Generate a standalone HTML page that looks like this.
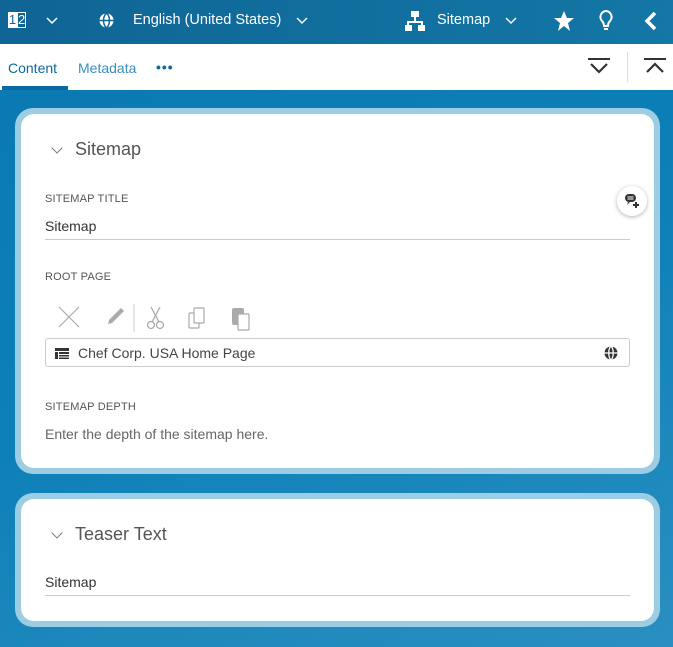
<!DOCTYPE html>
<html><head><meta charset="utf-8"><style>
*{margin:0;padding:0;box-sizing:border-box}
body{width:673px;height:647px;overflow:hidden;font-family:"Liberation Sans",sans-serif;background:linear-gradient(160deg,#0a78b0 0%,#0d80b8 50%,#2a8fc0 100%);position:relative}
.top{position:absolute;left:0;top:0;width:673px;height:44px;background:linear-gradient(90deg,#0f6595,#11709f 60%,#1477a5);color:#fff}
.top span{position:absolute;font-size:15px;top:12px;white-space:nowrap}
.top svg,.tabs svg{position:absolute}
.tabs{position:absolute;top:44px;left:0;width:673px;height:46px;background:#fff}
.card{position:absolute;left:15px;width:645px;background:#9ccde3;border-radius:18px;padding:6px}
.inner{background:#fff;border-radius:13px;width:100%;height:100%;position:relative}
.lbl{position:absolute;left:24px;font-size:11px;color:#555;letter-spacing:.2px}
.val{position:absolute;left:24px;font-size:14px;color:#333}
.line{position:absolute;left:24px;width:585px;height:1px;background:#ccc}
.h{position:absolute;left:54px;font-size:18px;color:#555}
.chev{position:absolute;left:32px;width:8px;height:8px;border-right:1.3px solid #777;border-bottom:1.3px solid #777;transform:rotate(45deg)}
</style></head><body>
<div class="top">
<div style="position:absolute;left:8px;top:12px;width:9px;height:16px;background:#fff;color:#0f6595;font-size:13px;text-align:center;line-height:16px">1</div>
<div style="position:absolute;left:17px;top:12px;width:9px;height:16px;border:1px solid #fff;font-size:13px;text-align:center;line-height:14px">2</div>
<svg style="left:46px;top:17px" width="12" height="8"><path d="M1 1l5 5 5-5" stroke="#fff" fill="none" stroke-width="1.5"/></svg>
<svg style="left:99px;top:13px" width="15" height="15"><circle cx="7.5" cy="7.5" r="7" fill="#fff"/><path d="M0 7.5h15M7.5 0c-4 4-4 11 0 15M7.5 0c4 4 4 11 0 15" stroke="#0f6595" stroke-width="1.5" fill="none"/></svg>
<span style="left:133px;font-size:14.5px">English (United States)</span>
<svg style="left:296px;top:17px" width="12" height="8"><path d="M1 1l5 5 5-5" stroke="#fff" fill="none" stroke-width="1.5"/></svg>
<svg style="left:405px;top:10px" width="20" height="22" fill="#fff"><rect x="6" y="1" width="8" height="6"/><rect x="9" y="7" width="2" height="5"/><rect x="2" y="11" width="16" height="2"/><rect x="2" y="12" width="2" height="3"/><rect x="16" y="12" width="2" height="3"/><rect x="0" y="15" width="7" height="6"/><rect x="13" y="15" width="7" height="6"/></svg>
<span style="left:437px;font-size:14.5px;top:12px">Sitemap</span>
<svg style="left:505px;top:17px" width="12" height="8"><path d="M1 1l5 5 5-5" stroke="#fff" fill="none" stroke-width="1.5"/></svg>
<svg style="left:553px;top:10px" width="22" height="22"><path d="M11 1l3 7h7l-6 5 2 8-6-5-6 5 2-8-6-5h7z" fill="#fff"/></svg>
<svg style="left:598px;top:9px" width="16" height="24" fill="none" stroke="#fff" stroke-width="2"><path d="M8 2a6 6 0 0 0-4 10c1 1 2 3 2 5h4c0-2 1-4 2-5a6 6 0 0 0-4-10zM6 20h4"/></svg>
<svg style="left:644px;top:11px" width="14" height="20"><path d="M11 2L3 10l8 8" stroke="#fff" stroke-width="3.5" fill="none"/></svg>
</div>
<div class="tabs">
<div style="position:absolute;left:8px;top:16px;font-size:14px;color:#0b6aa0">Content</div>
<div style="position:absolute;left:2px;top:42px;width:66px;height:4px;background:#0b6aa0"></div>
<div style="position:absolute;left:78px;top:16px;font-size:14px;color:#3a8fc4">Metadata</div>
<div style="position:absolute;left:156px;top:15px;font-size:14px;color:#0b6aa0;font-weight:bold;letter-spacing:1px">•••</div>
<svg style="left:587px;top:14px" width="24" height="18"><path d="M1 1h22" stroke="#333" stroke-width="2"/><path d="M4 6l8 8 8-8" stroke="#333" stroke-width="2.2" fill="none"/></svg>
<div style="position:absolute;left:627px;top:8px;width:1px;height:30px;background:#ddd"></div>
<svg style="left:643px;top:14px" width="24" height="18"><path d="M1 1h22" stroke="#333" stroke-width="2"/><path d="M4 14l8-8 8 8" stroke="#333" stroke-width="2.2" fill="none"/></svg>
</div>
<div class="card" style="top:108px;height:366px"><div class="inner">
<div class="chev" style="top:30px"></div>
<div class="h" style="top:25px">Sitemap</div>
<div class="lbl" style="top:79px">SITEMAP TITLE</div>
<div style="position:absolute;left:596px;top:72px;width:30px;height:30px;border-radius:50%;background:#fff;box-shadow:0 1px 4px rgba(0,0,0,.3)"><svg style="position:absolute;left:8px;top:8px" width="15" height="15"><rect x="0" y="0" width="11" height="8" rx="4" fill="#333"/><path d="M3 8l-1 3 3-3" fill="#333"/><path d="M2.5 3h6M2.5 5h6" stroke="#fff"/><path d="M11 8v6M8 11h6" stroke="#333" stroke-width="2"/></svg></div>
<div class="val" style="top:104px">Sitemap</div>
<div class="line" style="top:125px"></div>
<div class="lbl" style="top:157px">ROOT PAGE</div>
<svg style="position:absolute;left:36px;top:190px" width="210" height="28">
<path d="M2 3l20 20M22 3l-20 20" stroke="#aaa" stroke-width="1.2"/>
<path d="M64 4l3 3-12 12-4 1 1-4z" fill="#aaa"/>
<path d="M77 0v28" stroke="#ccc"/>
<circle cx="94" cy="21" r="3.5" stroke="#aaa" fill="none" stroke-width="1.3"/><circle cx="103" cy="21" r="3.5" stroke="#aaa" fill="none" stroke-width="1.3"/><path d="M95 18l8-15M102 18l-8-15" stroke="#aaa" stroke-width="1.3"/>
<rect x="132" y="9" width="10" height="15" rx="1" fill="none" stroke="#aaa" stroke-width="1.2"/><rect x="137" y="4" width="10" height="15" rx="1" fill="#fff" stroke="#aaa" stroke-width="1.2"/>
<rect x="175" y="4" width="12" height="17" rx="2" fill="#aaa"/><rect x="181" y="10" width="11" height="16" rx="1" fill="#fff" stroke="#aaa" stroke-width="1.2"/>
</svg>
<div style="position:absolute;left:24px;top:224px;width:585px;height:29px;border:1px solid #ccc;border-radius:3px">
<svg style="position:absolute;left:9px;top:9px" width="14" height="11" fill="#333"><rect x="0" y="0" width="14" height="3"/><rect x="0" y="4" width="3" height="7"/><rect x="4" y="4" width="10" height="2"/><rect x="4" y="7" width="10" height="1.5"/><rect x="4" y="9.5" width="10" height="1.5"/></svg>
<div style="position:absolute;left:32px;top:6px;font-size:14px;color:#444">Chef Corp. USA Home Page</div>
<svg style="position:absolute;left:558px;top:7px" width="14" height="14"><circle cx="7" cy="7" r="6.5" fill="#333"/><path d="M0 7h14M7 0c-3 3-3 11 0 14M7 0c3 3 3 11 0 14" stroke="#fff" stroke-width="1.3" fill="none"/></svg>
</div>
<div class="lbl" style="top:287px">SITEMAP DEPTH</div>
<div class="val" style="top:312px;color:#666">Enter the depth of the sitemap here.</div>
</div></div>
<div class="card" style="top:493px;height:134px"><div class="inner">
<div class="chev" style="top:30px"></div>
<div class="h" style="top:25px">Teaser Text</div>
<div class="val" style="top:75px">Sitemap</div>
<div class="line" style="top:96px"></div>
</div></div>
</body></html>
